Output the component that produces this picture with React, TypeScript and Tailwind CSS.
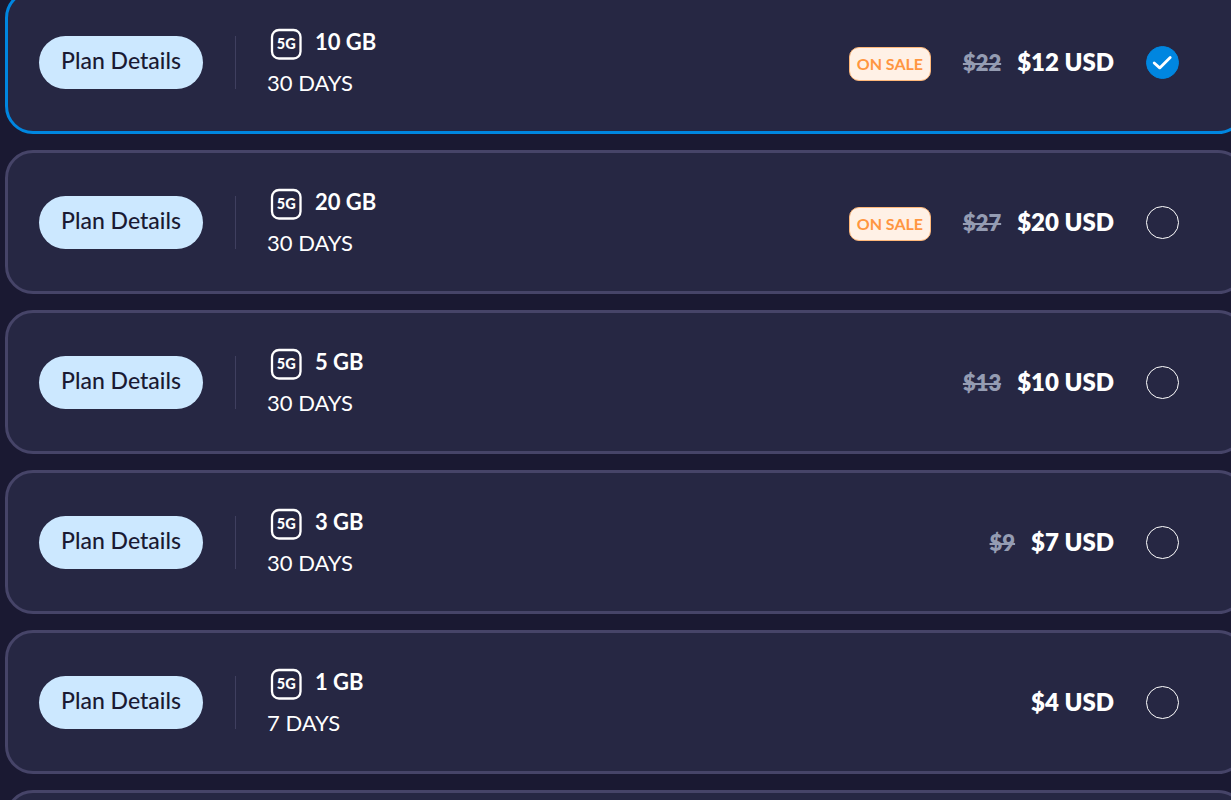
import React, { useState } from 'react';

interface Plan {
  id: string;
  data: string;
  duration: string;
  price: string;
  oldPrice?: string;
  onSale?: boolean;
}

const plans: Plan[] = [
  { id: 'plan-10', data: '10 GB', duration: '30 DAYS', price: '$12 USD', oldPrice: '$22', onSale: true },
  { id: 'plan-20', data: '20 GB', duration: '30 DAYS', price: '$20 USD', oldPrice: '$27', onSale: true },
  { id: 'plan-5', data: '5 GB', duration: '30 DAYS', price: '$10 USD', oldPrice: '$13' },
  { id: 'plan-3', data: '3 GB', duration: '30 DAYS', price: '$7 USD', oldPrice: '$9' },
  { id: 'plan-1', data: '1 GB', duration: '7 DAYS', price: '$4 USD' },
];

function FiveGIcon() {
  return (
    <svg viewBox="0 0 38 38" className="w-[38px] h-[38px] shrink-0" aria-hidden="true">
      <rect x="5" y="5" width="28.5" height="28.5" rx="7" fill="none" stroke="#fff" strokeWidth="2.3" />
      <text x="19.2" y="24.4" textAnchor="middle" fontSize="14.5" fontWeight="900" fill="#fff">5G</text>
    </svg>
  );
}

function PlanCard({ plan, selected, onSelect }: { plan: Plan; selected: boolean; onSelect: () => void }) {
  return (
    <li
      className={`flex items-center h-36 pl-[31px] pr-16 rounded-[28px] border-3 bg-[#262743] ${
        selected ? 'border-[#0086e0]' : 'border-[#464468]'
      }`}
    >
      <button className="h-[53px] w-[164px] pb-1 shrink-0 rounded-full bg-[#cce8ff] text-[23px] font-medium text-[#1a1a33]">
        Plan Details
      </button>
      <div className="w-px h-[53px] ml-8 mr-[31px] shrink-0 bg-[#3f3f5f]" />
      <div>
        <div className="flex items-center gap-[10px]">
          <FiveGIcon />
          <span className="text-[22px] leading-7 pb-1 font-bold">{plan.data}</span>
        </div>
        <p className="mt-1 text-[22px] leading-8">{plan.duration}</p>
      </div>

      {/* Price and selector */}
      <label htmlFor={plan.id} className="ml-auto flex items-center cursor-pointer">
        {plan.onSale && (
          <span className="flex items-center justify-center w-[82px] h-[34px] mr-8 mt-1 rounded-[10px] border border-[#ffb87a] bg-[#fff1e6] text-base font-bold text-[#ff9640]">
            ON SALE
          </span>
        )}
        {plan.oldPrice && <s className="mr-4 text-[22px] font-extrabold text-[#949cb2]">{plan.oldPrice}</s>}
        <span className="text-[24px] font-extrabold">{plan.price}</span>
        <span className="relative ml-8 w-[33px] h-[33px]">
          <input
            id={plan.id}
            type="radio"
            name="plan"
            checked={selected}
            onChange={onSelect}
            className="block appearance-none w-full h-full rounded-full border border-white checked:border-[#0086e0] checked:bg-[#0086e0] cursor-pointer"
          />
          {selected && (
            <svg viewBox="0 0 33 33" className="absolute inset-0 pointer-events-none" aria-hidden="true">
              <path d="M8.2 17 L13.7 21.9 L24.2 11.4" fill="none" stroke="#fff" strokeWidth="2.8" strokeLinecap="round" strokeLinejoin="round" />
            </svg>
          )}
        </span>
      </label>
    </li>
  );
}

export default function App() {
  const [selectedId, setSelectedId] = useState('plan-10');

  return (
    <main className="h-screen overflow-hidden bg-[#1a1932] font-['Lato',sans-serif] text-white">
      <ul className="flex flex-col gap-4 -mt-[10px] ml-[5px] -mr-[15px]">
        {plans.map(plan => (
          <PlanCard
            key={plan.id}
            plan={plan}
            selected={plan.id === selectedId}
            onSelect={() => setSelectedId(plan.id)}
          />
        ))}
        <li className="h-36 rounded-[28px] border-3 border-[#464468] bg-[#262743]" />
      </ul>
    </main>
  );
}
